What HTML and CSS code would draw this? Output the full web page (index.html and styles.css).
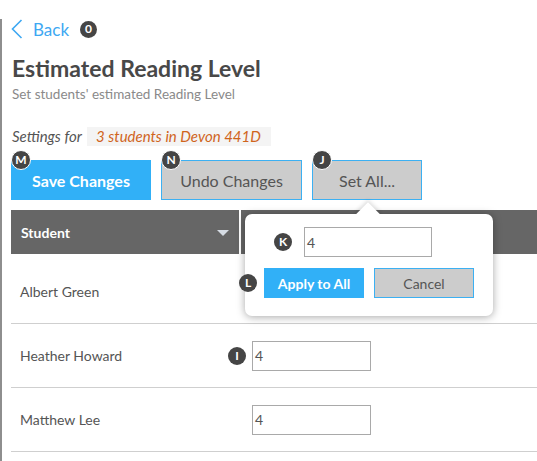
FILE: index.html
```html
<!DOCTYPE html>
<html>
<head>
<meta charset="utf-8">
<link rel="stylesheet" href="styles.css">
</head>
<body>
<div class="page">
  <div class="back-row">
    <a class="back">
      <svg class="chev" width="12" height="20" viewBox="0 0 12 20"><path d="M10.5 1 L1.5 10 L10.5 19" fill="none" stroke="#3ea8f2" stroke-width="1.6"/></svg>
      <span>Back</span>
    </a>
    <span class="badge badge-inline">0</span>
  </div>
  <h1 class="title">Estimated Reading Level</h1>
  <p class="subtitle">Set students' estimated Reading Level</p>
  <div class="settings">Settings for <span class="scope">3 students in Devon 441D</span></div>
  <div class="actions">
    <div class="btn-wrap">
      <span class="badge badge-corner">M</span>
      <button class="btn btn-primary btn-save">Save Changes</button>
    </div>
    <div class="btn-wrap">
      <span class="badge badge-corner">N</span>
      <button class="btn btn-secondary btn-undo">Undo Changes</button>
    </div>
    <div class="btn-wrap">
      <span class="badge badge-corner">J</span>
      <button class="btn btn-secondary btn-setall">Set All...</button>
      <div class="popover">
        <div class="pop-row">
          <span class="badge badge-k">K</span>
          <div class="input pop-input">4</div>
        </div>
        <div class="pop-buttons">
          <span class="badge badge-l">L</span>
          <button class="btn btn-primary btn-small">Apply to All</button>
          <button class="btn btn-secondary btn-small">Cancel</button>
        </div>
      </div>
    </div>
  </div>
  <div class="table">
    <div class="thead">
      <div class="th th-student">Student <span class="tri"></span></div>
      <div class="th th-level"></div>
    </div>
    <div class="tr tr-first">
      <div class="td-name">Albert Green</div>
      <div class="td-level"><div class="input row-input">4</div></div>
    </div>
    <div class="tr">
      <div class="td-name">Heather Howard</div>
      <div class="td-level"><span class="badge badge-i">I</span><div class="input row-input">4</div></div>
    </div>
    <div class="tr">
      <div class="td-name">Matthew Lee</div>
      <div class="td-level"><div class="input row-input">4</div></div>
    </div>
  </div>
</div>
</body>
</html>
```
FILE: styles.css
```css
* { box-sizing: border-box; }
html, body { margin: 0; padding: 0; background: #fff; }
body {
  font-family: Lato, "Open Sans", sans-serif;
  color: #555;
  overflow: hidden;
}
.page {
  min-height: 461px;
  border-left: 2px solid #8e8e8e;
  padding-left: 9px;
}
.back-row {
  display: flex;
  align-items: center;
  height: 20px;
  margin-top: 19px;
}
.back {
  display: flex;
  align-items: center;
  color: #3ea8f2;
  font-size: 17px;
  text-decoration: none;
}
.chev { display: block; margin-right: 10px; }
.badge {
  display: inline-flex;
  align-items: center;
  justify-content: center;
  width: 18px;
  height: 18px;
  border-radius: 50%;
  background: #454545;
  color: #fff;
  font-size: 12px;
  font-weight: 700;
  line-height: 1;
}
.badge-inline { margin-left: 11px; width: 17px; height: 17px; }
.title {
  margin: 16px 0 0 1px;
  font-size: 23px;
  font-weight: 700;
  color: #484848;
  line-height: 26px;
}
.subtitle {
  margin: 5px 0 0 1px;
  font-size: 13.5px;
  color: #8a8a8a;
  line-height: 16px;
}
.settings {
  margin: 25px 0 0 1px;
  font-size: 15px;
  font-style: italic;
  color: #555;
  line-height: 19px;
}
.scope {
  display: inline-block;
  background: #f4f4f4;
  color: #d0641c;
  padding: 0 10px 0 9px;
  margin-left: 2px;
}
.actions {
  display: flex;
  gap: 10px;
  margin-top: 14px;
}
.btn-wrap { position: relative; }
.badge-corner {
  position: absolute;
  left: 0;
  top: -10px;
  width: 20px;
  height: 20px;
  border: 1.5px solid #fff;
  z-index: 2;
}
.btn {
  font-family: inherit;
  height: 40px;
  font-size: 16px;
  cursor: pointer;
  padding: 0;
}
.btn-primary {
  background: #31b0f7;
  color: #fff;
  font-weight: 700;
  border: none;
}
.btn-secondary {
  background: #cccccc;
  color: #555;
  border: 1px solid #3cb0f2;
}
.btn-save { width: 140px; }
.btn-undo { width: 141px; }
.btn-setall { width: 110px; }
.popover {
  position: absolute;
  left: -67px;
  top: 54px;
  width: 248px;
  height: 102px;
  background: #fff;
  border-radius: 7px;
  box-shadow: 0 1px 8px rgba(0,0,0,0.35);
  z-index: 5;
  padding: 13px 0 0 0;
}
.popover::before {
  content: "";
  position: absolute;
  left: 114px;
  top: -8px;
  width: 18px;
  height: 18px;
  background: #fff;
  transform: rotate(45deg);
  box-shadow: -2px -2px 4px rgba(0,0,0,0.12);
}
.popover::after {
  content: "";
  position: absolute;
  left: 100px;
  top: 0;
  width: 46px;
  height: 14px;
  background: #fff;
}
.pop-row {
  position: relative;
  z-index: 1;
  display: flex;
  align-items: center;
  padding-left: 29px;
}
.badge-k { margin-right: 12px; }
.input {
  border: 1px solid #a9a9a9;
  background: #fff;
  color: #555;
  font-size: 14px;
  padding-left: 2px;
  display: flex;
  align-items: center;
}
.pop-input { width: 128px; height: 30px; }
.pop-buttons {
  position: relative;
  display: flex;
  gap: 10px;
  margin-top: 11px;
  padding-left: 19px;
}
.badge-l {
  position: absolute;
  left: -6px;
  top: 6px;
}
.btn-small {
  width: 100px;
  height: 30px;
  font-size: 14px;
}
.table { margin-top: 10px; }
.thead {
  display: flex;
  height: 44px;
  gap: 2px;
}
.th {
  background: #666;
  color: #fff;
  font-size: 14px;
  font-weight: 700;
  display: flex;
  align-items: center;
}
.th-student {
  width: 228px;
  padding-left: 10px;
  justify-content: space-between;
  padding-right: 10px;
}
.th-level { flex: 1; }
.tri {
  width: 0;
  height: 0;
  border-left: 6px solid transparent;
  border-right: 6px solid transparent;
  border-top: 6px solid #d6dce4;
  margin-top: 2px;
}
.tr {
  display: flex;
  align-items: center;
  height: 64px;
  border-bottom: 1px solid #cfcfcf;
}
.tr-first { height: 70px; padding-top: 6px; }
.td-name {
  width: 230px;
  padding-left: 9px;
  font-size: 14px;
  color: #555;
}
.td-level {
  position: relative;
  padding-left: 11px;
  display: flex;
  align-items: center;
}
.row-input { width: 119px; height: 30px; }
.badge-i {
  position: absolute;
  left: -13px;
  top: 6px;
}
```
